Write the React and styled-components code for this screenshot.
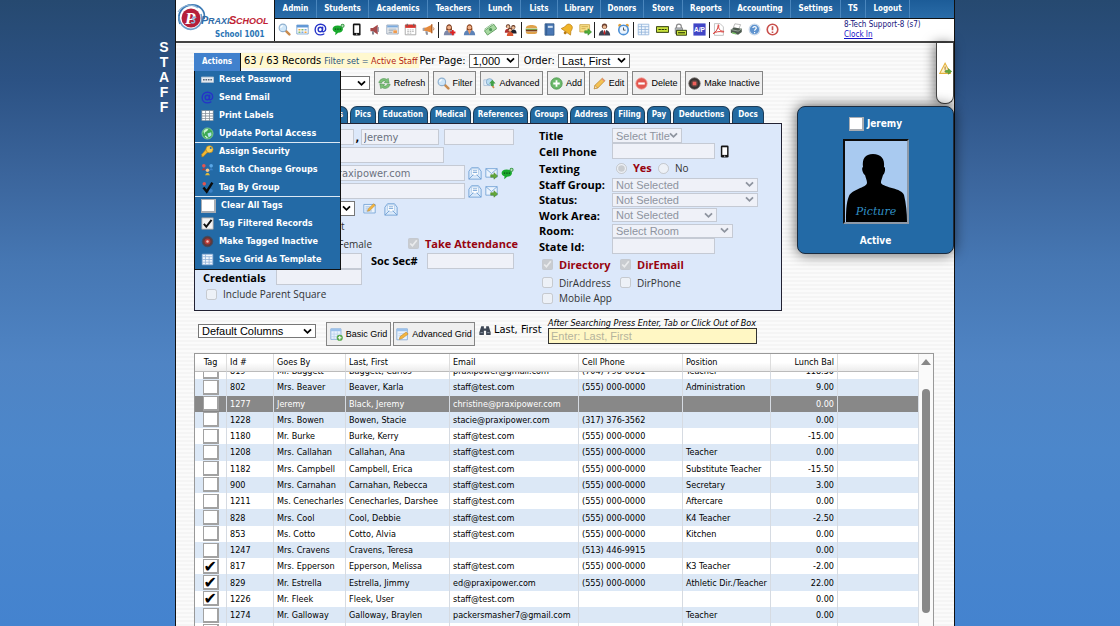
import React, { useLayoutEffect, useRef } from "react";
import styled, { createGlobalStyle } from "styled-components";

const UI = '"DejaVu Sans Condensed", "DejaVu Sans", Tahoma, sans-serif';
const FORM = '"Open Sans", "Noto Sans", Tahoma, sans-serif';
const ARIAL = '"Liberation Sans", Arial, sans-serif';

const GlobalStyle = createGlobalStyle`
  * { box-sizing: border-box; }
  body {
    margin: 0;
    font-family: ${UI};
    font-size: 11px;
    color: #000;
    background: #4585cf;
  }
  button, input, select { margin: 0; }
`;

/* ---------- icons ---------- */

const person = (x, y, c) => (
  <g>
    <circle cx={x} cy={y} r="2.6" fill="#5a2d1a" />
    <circle cx={x} cy={y + 0.7} r="1.8" fill="#f0c09a" />
    <path d={`M${x - 4} ${y + 8}q0-5 4-5t4 5z`} fill={c} />
  </g>
);

const drawings = {
  search: (
    <g>
      <path d="M9 9l5 5" stroke="#c98b4e" strokeWidth="3" strokeLinecap="round" />
      <circle cx="6" cy="6" r="4.6" fill="#cfe6f8" stroke="#8fb0cf" strokeWidth="1.4" />
      <path d="M3.5 6a2.6 2.6 0 0 1 2.6-2.6" stroke="#fff" fill="none" strokeWidth="1.3" />
    </g>
  ),
  calendarGrid: (
    <g>
      <path d="M1 2.5h14v11H1z" fill="#fff" stroke="#6f9ccb" />
      <path d="M1 2.5h14v3H1z" fill="#5f97d6" />
      <path d="M3 7.500h2.500v1.800H3zM10.500 10.500h2.500v1.800h-2.500z" fill="#f0a63c" />
      <path d="M6.700 7.500h2.500v1.800H6.700zM3 10.500h2.500v1.800H3z" fill="#7db96b" />
      <path d="M10.500 7.500h2.500v1.800h-2.500zM6.700 10.500h2.500v1.800H6.700z" fill="#7ea6d8" />
    </g>
  ),
  at: (
    <g fill="none" stroke="#2533c8" strokeWidth="1.700" strokeLinecap="round">
      <circle cx="7.800" cy="8" r="2.700" />
      <path d="M10.700 5.200l-.5 4.300c-.2 2.200 3.900 1.500 4.200-2 .2-3.500-2.700-6-6.300-6C4.200 1.500 1.400 4.500 1.400 8.200c0 3.800 2.700 6.400 6.500 6.400 1.700 0 3.100-.4 4.200-1.100" />
    </g>
  ),
  chat: (
    <g>
      <path d="M7 3c4 0 6.500 1.800 6.500 4.500S11 12 7.500 12L4 15l.3-3.600C2 10.700.7 9.300.7 7.500.7 4.800 3 3 7 3z" fill="#18a92c" />
      <path d="M3.500 7.500h1.600M6.500 7.500h1.600M9.500 7.500h1.600" stroke="#0a4f14" strokeWidth="1.500" />
      <circle cx="13" cy="3.500" r="2.500" fill="#3d9a4a" />
      <path d="M13 2v3M11.500 3.500h3" stroke="#d8f5dc" strokeWidth=".8" />
    </g>
  ),
  phone: (
    <g>
      <rect x="3.500" y=".5" width="9.500" height="15" rx="1.600" fill="#151515" />
      <rect x="5.300" y="2.800" width="5.900" height="9.400" fill="#fff" />
      <circle cx="8.250" cy="13.800" r=".8" fill="#ddd" />
    </g>
  ),
  speaker: (
    <g>
      <path d="M3 6h3l6-4v12l-6-4H3z" fill="#a64a4a" />
      <path d="M5 10v4h2.500l-.5-4z" fill="#7c7c86" />
      <path d="M12.500 5v6" stroke="#8c8ca0" strokeWidth="1.600" />
    </g>
  ),
  news: (
    <g>
      <path d="M1 2.500h14v11H1z" fill="#f6f6f6" stroke="#8b9bb0" />
      <path d="M1.500 3h13v2.500h-13z" fill="#79a9dd" />
      <path d="M3 7.500h10M3 9.500h6M3 11.500h5" stroke="#89a" />
      <path d="M9 9h4.500v3.500H9z" fill="#ef9a4d" />
    </g>
  ),
  calendar: (
    <g>
      <path d="M1.500 2.500h13v12h-13z" fill="#fff" stroke="#9a9a9a" />
      <path d="M1.500 2h13v4h-13z" fill="#d9332b" />
      <path d="M4 1v3M12 1v3" stroke="#666" strokeWidth="1.400" />
      <path d="M4 8.500h8M4 10.500h8M4 12.500h5" stroke="#aaa" strokeDasharray="2 1" />
    </g>
  ),
  megaphone: (
    <g>
      <path d="M1 6l4-.5L12 2v10L5 9.800 1 9.500z" fill="#e58a3c" />
      <path d="M12 1.500v11" stroke="#b5642a" strokeWidth="1.800" />
      <path d="M4 10l1 4.500h2.500L6.800 10z" fill="#8b8f9c" />
      <path d="M1 6v3.500h2V5.800z" fill="#9ca3b3" />
      <path d="M14 5.500q1.500 1.500 0 3.500" stroke="#b5642a" fill="none" />
    </g>
  ),
  personAdd: (
    <g>
      <path d="M4 6c0-6 7-6 7 0v3H4z" fill="#7a3a1c" />
      <circle cx="7.500" cy="5.500" r="2.400" fill="#f0b088" />
      <path d="M1 15q0-6.500 6.500-6.500T14 15z" fill="#7d88a8" />
      <path d="M5.500 8.500h4L7.500 13z" fill="#e89a6a" />
      <path d="M12 8.500v6.500M8.800 11.700h6.500" stroke="#e02020" strokeWidth="2.200" />
    </g>
  ),
  personDesk: (
    <g>
      <path d="M4.500 6c0-6 7-6 7 0v3.500h-7z" fill="#8a431d" />
      <circle cx="8" cy="5.500" r="2.400" fill="#f0b088" />
      <path d="M1 15q0-6.500 7-6.500t7 6.500z" fill="#5d83b8" />
      <path d="M5.500 8.500h5L8 14z" fill="#e89a6a" />
    </g>
  ),
  money: (
    <g transform="rotate(-35 8 8)">
      <path d="M1 5h14v6.500H1z" fill="#a7d8a0" stroke="#5a9a5a" />
      <circle cx="8" cy="8.200" r="2" fill="#4f9457" />
      <path d="M2 3.500h12" stroke="#86bd86" />
    </g>
  ),
  family: (
    <g>
      {person(5, 4, "#b03030")}
      {person(11.500, 5, "#20202a")}
      {person(7.500, 8.200, "#d9542f")}
    </g>
  ),
  burger: (
    <g>
      <path d="M1 6.500C1 3.500 4 2.500 8 2.500s7 1 7 4z" fill="#e0a24a" />
      <path d="M.8 7h14.400v1.500H.8z" fill="#6aa23c" />
      <path d="M1 8.500h14v2H1z" fill="#7b3f1c" />
      <path d="M1 10.800h14c0 2-1 2.700-3 2.700H4c-2 0-3-.7-3-2.700z" fill="#e0a24a" />
    </g>
  ),
  book: (
    <g>
      <path d="M2.500 1h11v14h-11z" fill="#4a78b5" stroke="#2f5788" />
      <path d="M4.500 1v14" stroke="#2f5788" />
      <path d="M6 3.500h6v2.500H6z" fill="#cfe0f2" />
    </g>
  ),
  bell: (
    <g transform="rotate(35 8 8)">
      <path d="M8 1c4 0 4.500 3.500 4.700 6.500L15 11.500H1L3.300 7.500C3.500 4.500 4 1 8 1z" fill="#f0b429" stroke="#b97a10" strokeWidth=".8" />
      <circle cx="8" cy="13" r="1.800" fill="#b97a10" />
    </g>
  ),
  noteArrow: (
    <g>
      <path d="M1 2h12v9H1z" fill="#f8df87" stroke="#caa244" />
      <path d="M3 4.500h8M3 7h5" stroke="#caa244" />
      <path d="M7 9.500h4V7l4.500 4-4.500 4v-2.500H7z" fill="#4fae3a" stroke="#2d7a20" strokeWidth=".6" />
    </g>
  ),
  manSuit: (
    <g>
      <circle cx="8" cy="4" r="3.300" fill="#6b4030" />
      <circle cx="8" cy="5" r="2.200" fill="#e9b893" />
      <path d="M1 15.500q0-7 7-7t7 7z" fill="#3c4150" />
      <path d="M6 8.500h4L8 14z" fill="#fff" />
      <path d="M7.500 9h1l.6 4-1.100 1.500L6.900 13z" fill="#c22" />
    </g>
  ),
  clock: (
    <g>
      <circle cx="3.500" cy="3" r="2" fill="#e2a03a" />
      <circle cx="12.500" cy="3" r="2" fill="#e2a03a" />
      <circle cx="8" cy="8.500" r="5.800" fill="#eaf4ff" stroke="#4b8fd6" strokeWidth="2" />
      <path d="M8 5.500v3.300h2.500" stroke="#333" fill="none" />
    </g>
  ),
  table: (
    <g>
      <path d="M1.500 1.500h13v13h-13z" fill="#f1f7fd" stroke="#92b4da" />
      <path d="M1.500 4.500h13M1.500 8h13M1.500 11.300h13M5.500 1.500v13M10 4.500v10" stroke="#92b4da" />
    </g>
  ),
  register: (
    <g>
      <path d="M.5 4.500h15v7H.5z" fill="#c9e23c" stroke="#2b3808" strokeWidth="1.200" />
      <path d="M3 8h10" stroke="#2b3808" strokeWidth="1.500" strokeDasharray="3 .8" />
    </g>
  ),
  lockCard: (
    <g>
      <path d="M3 8V4.500a3 3 0 0 1 6 0V8" fill="none" stroke="#8c8c8c" strokeWidth="1.500" />
      <path d="M1.500 6h9v7h-9z" fill="#b7bcc4" stroke="#777" strokeWidth=".8" />
      <path d="M3 9h12.500v6H3z" fill="#c9e23c" stroke="#2b3808" strokeWidth="1.200" />
      <path d="M5 12h8.500" stroke="#2b3808" strokeWidth="1.400" />
    </g>
  ),
  ap: (
    <g>
      <path d="M.5.5h15v15H.5z" fill="#4146c6" />
      <text x="8" y="11.500" textAnchor="middle" fontFamily="Liberation Sans, sans-serif" fontWeight="700" fontSize="8" fill="#fff">A/P</text>
    </g>
  ),
  pdf: (
    <g>
      <path d="M3 .8h7l4 4v10.400H3z" fill="#fff" stroke="#b5b5b5" />
      <path d="M1.500 13C5 11 7.500 7 7.500 3c0-1.500 1.300-1 .8.800C7.600 7 10 10 14 10.200c1.500.2.500 1.200-1 .8-4-1-8-.3-11.500 2z" fill="none" stroke="#d93a35" strokeWidth="1.200" />
    </g>
  ),
  printer: (
    <g>
      <path d="M6 1l7 1-2 5-7-1z" fill="#fff" stroke="#888" strokeWidth=".7" />
      <path d="M1 8l4-2.500L14.500 7v4L10 14.500 1 12z" fill="#4d5a4f" />
      <path d="M1 8l9 2 4.500-3" stroke="#a8b5a8" fill="none" />
      <path d="M3 11l5 1.500-1 1.500-5-1.500z" fill="#7cc36a" />
    </g>
  ),
  help: (
    <g>
      <circle cx="8" cy="8" r="6.500" fill="#5e93cf" stroke="#c8d8ea" strokeWidth="1.600" />
      <path d="M6 6.300c0-2.600 4.200-2.500 4.200 0 0 1.600-2.100 1.500-2.100 3.200M8.100 11v1.500" stroke="#fff" strokeWidth="1.500" fill="none" />
    </g>
  ),
  power: (
    <g>
      <circle cx="8" cy="8" r="6.500" fill="#fff" stroke="#c9504c" strokeWidth="2" />
      <path d="M8 4v5M8 10.500v1.800" stroke="#c9504c" strokeWidth="2" />
    </g>
  ),
  password: (
    <g>
      <path d="M.5 5h15v6.500H.5z" fill="#e8eef4" stroke="#b9c6d4" />
      <path d="M2.500 8.300h11" stroke="#59687a" strokeWidth="1.600" strokeDasharray="2 1" />
    </g>
  ),
  labels: (
    <g>
      <path d="M.5 1.500h15v13H.5z" fill="#8a939c" />
      <path d="M1.500 2.500h3.700v2.300H1.500zM6.200 2.500h3.700v2.300H6.200zM10.900 2.500h3.700v2.300h-3.700zM1.500 5.800h3.700v2.300H1.500zM6.200 5.800h3.700v2.300H6.200zM10.900 5.800h3.700v2.300h-3.700zM1.500 9.100h3.700v2H1.500zM6.200 9.100h3.700v2H6.200zM10.900 9.100h3.700v2h-3.700zM1.500 12h3.700v1.700H1.500zM6.200 12h3.700v1.700H6.200zM10.900 12h3.700v1.700h-3.700z" fill="#fff" />
    </g>
  ),
  globe: (
    <g>
      <circle cx="8" cy="8" r="6.800" fill="#3faa55" stroke="#8fd49a" />
      <path d="M3 5q3-3.500 6-2.500L7.500 5 5 6.500 4 9z" fill="#c7efcf" />
      <path d="M8 8l4.500-1.500L13 10l-3.500 3z" fill="#b4e3f5" />
      <path d="M5 11l3 2.500" stroke="#e6f8e8" strokeWidth="1.400" />
    </g>
  ),
  key: (
    <g>
      <path d="M9 8l-6.500 6.500H1V11.500L6.500 5z" fill="#f2b632" stroke="#b98212" strokeWidth=".7" />
      <circle cx="10.500" cy="5.200" r="4.400" fill="#f8cb52" stroke="#b98212" strokeWidth=".8" />
      <circle cx="12" cy="3.800" r="1.200" fill="#2470ad" />
    </g>
  ),
  groups: (
    <g>
      <circle cx="3.500" cy="3.500" r="2.200" fill="#e3554f" />
      <path d="M1 9q2.500-5 5 0z" fill="#b93530" />
      <circle cx="12.500" cy="3.500" r="2.200" fill="#5aa8e8" />
      <path d="M10 9q2.500-5 5 0z" fill="#3b82c8" />
      <circle cx="8" cy="9" r="2.200" fill="#f5c28a" />
      <path d="M5 15q3-6 6 0z" fill="#e2b93b" />
    </g>
  ),
  tagGroup: (
    <g>
      <circle cx="4" cy="3.500" r="2.200" fill="#e3554f" />
      <circle cx="12" cy="12" r="2.500" fill="#3b82c8" />
      <path d="M3 8l4 5 7-11" fill="none" stroke="#0b0b0b" strokeWidth="3" />
    </g>
  ),
  checked: (
    <g>
      <path d="M1 1h14v14H1z" fill="#f3f3f3" stroke="#9a9a9a" />
      <path d="M3.500 8.500l3 3.500L13 3.500" fill="none" stroke="#111" strokeWidth="2.400" />
    </g>
  ),
  stop: (
    <g>
      <circle cx="8" cy="8" r="7" fill="#33302f" stroke="#6d6562" strokeWidth="1" />
      <circle cx="8" cy="8" r="4.600" fill="#54403d" />
      <path d="M5.700 5.700h4.600v4.600H5.700z" fill="#f0605a" />
    </g>
  ),
  inactive: (
    <g>
      <circle cx="8" cy="8" r="6.500" fill="#5d3a3e" stroke="#3f4a5e" />
      <circle cx="8" cy="8" r="3.600" fill="#b63a36" />
      <circle cx="8" cy="8" r="1.500" fill="#f4c3bd" />
    </g>
  ),
  refresh: (
    <g fill="#7cc077" stroke="#3c8443" strokeWidth=".6">
      <path d="M1 7C2 2.500 7 .5 11 3L12.500 1.500l1.200 6-6-.5 1.600-1.600C7.200 4.200 5 5 4.300 7.500z" />
      <path d="M15 9c-1 4.500-6 6.500-10 4L3.500 14.500l-1.200-6 6 .5-1.600 1.600c2.100 1.200 4.300.4 5-2.100z" />
    </g>
  ),
  advanced: (
    <g>
      <path d="M1 3.500h8v7H1z" fill="#e4eef8" stroke="#a9bfd6" />
      <circle cx="8" cy="6" r="4" fill="#b9dcf2" stroke="#7fa5c8" />
      <path d="M10.500 9.500l3 4" stroke="#c98b4e" strokeWidth="2" />
      <path d="M11.500 3.500l4 4.500h-2.300v3H9.800V8H7.500z" fill="#43a047" />
    </g>
  ),
  add: (
    <g>
      <circle cx="8" cy="8" r="7" fill="#6bb96a" stroke="#4b924c" />
      <path d="M8 4v8M4 8h8" stroke="#fff" strokeWidth="2.200" />
    </g>
  ),
  edit: (
    <g>
      <path d="M1.500 14.500l1-4.500L11.500 1.500l3.200 3L6 13.500z" fill="#f4c153" stroke="#b57f21" strokeWidth=".8" />
      <path d="M1.500 14.500l1-4 3 3z" fill="#f7e3c2" stroke="#b57f21" strokeWidth=".6" />
      <path d="M10.500 2.500l3.200 3 1-1-3.200-3z" fill="#e5877c" />
    </g>
  ),
  remove: (
    <g>
      <circle cx="8" cy="8" r="7" fill="#e2574f" stroke="#f0a49f" />
      <path d="M4 8h8" stroke="#fff" strokeWidth="2.600" />
    </g>
  ),
  mail: (
    <g>
      <path d="M1 6l3-4h8l3 4v9H1z" fill="#dbeafb" stroke="#6f9fd4" />
      <path d="M4 3.500h8v6L8 11.500 4 9.500z" fill="#fff" stroke="#9dbfe4" strokeWidth=".7" />
      <path d="M1 15l5-5M15 15l-5-5M5.500 5.500h5M5.500 7.500h5" stroke="#6f9fd4" fill="none" />
    </g>
  ),
  mailSend: (
    <g>
      <path d="M1 2h14v10.500H1z" fill="#eaf3fd" stroke="#6f9fd4" />
      <path d="M1 2l7 6 7-6" stroke="#6f9fd4" fill="none" />
      <path d="M7 9.500h4V7l4.500 4-4.500 4v-2.500H7z" fill="#63a83a" stroke="#3c7a20" strokeWidth=".6" />
    </g>
  ),
  mailEdit: (
    <g>
      <path d="M1 3h14v10.500H1z" fill="#eaf3fd" stroke="#6f9fd4" />
      <path d="M3 6h6M3 8.500h4M3 11h8" stroke="#8fb0d8" />
      <path d="M5.500 11.500l1-3L13 2l2 2-6.500 6.500z" fill="#f4b53f" stroke="#b57f21" strokeWidth=".6" />
    </g>
  ),
  gridAdd: (
    <g>
      <path d="M1 1h12.500v13H1z" fill="#eaf3fd" stroke="#7fa7d6" />
      <path d="M1 1h12.500v3H1z" fill="#9cc2ec" />
      <path d="M1 7.500h12M1 10.700h12M5 4v10M9 4v10" stroke="#bcd3ec" />
      <circle cx="12" cy="12" r="3.800" fill="#57a94c" />
      <path d="M12 9.800v4.400M9.800 12h4.400" stroke="#fff" strokeWidth="1.400" />
    </g>
  ),
  gridEdit: (
    <g>
      <path d="M1 1h13v13.500H1z" fill="#eaf3fd" stroke="#7fa7d6" />
      <path d="M1 1h13v3H1z" fill="#9cc2ec" />
      <path d="M3 7h9M3 9.500h5" stroke="#bcd3ec" />
      <path d="M4 14l1-3.500L12.500 5 15 7.500 7.500 13z" fill="#f4b53f" stroke="#b57f21" strokeWidth=".6" />
    </g>
  ),
  binoculars: (
    <g fill="#3d4654">
      <path d="M3 3h3.500v3h3V3H13l2.500 8v3.500h-6V9h-3v5.500h-6V11z" />
      <path d="M2 11.500h3M11 11.500h3" stroke="#a9b5c6" />
    </g>
  ),
  warning: (
    <g>
      <path d="M7.500 1.500L14 14H1z" fill="#fdf1c9" stroke="#e3b13c" strokeWidth="1.300" />
      <path d="M7.500 5.500v4M7.500 10.800v1.400" stroke="#a9762a" strokeWidth="1.300" />
      <path d="M8 10.300h3.500V8l4.200 3.600-4.200 3.600v-2.400H8z" fill="#63a83a" stroke="#3c7a20" strokeWidth=".5" />
    </g>
  ),
};

const Svg = styled.svg`
  flex: none;
  display: block;
`;

const Icon = ({ name, size = 13 }) => (
  <Svg width={size} height={size} viewBox="0 0 16 16" aria-hidden="true">
    {drawings[name]}
  </Svg>
);

/* ---------- page frame ---------- */

const Backdrop = styled.div`
  display: flex;
  justify-content: center;
  height: 100vh;
  padding-left: 10px;
  overflow: hidden;
  background: linear-gradient(#264970, #2c5284 13%, #3b659c 28%, #4677b3 42%, #4f84c4 58%, #4c87cb 72%, #4483cf);
`;

const Margin = styled.div`
  flex: 1;
  display: flex;
  flex-direction: column;
  align-items: flex-end;
  padding: 40px 4px 0 0;
`;

const SideLetter = styled.span`
  width: 14px;
  font: bold 14px/14px ${ARIAL};
  text-align: center;
  color: #fff;
  margin-bottom: 1px;
`;

const Page = styled.div`
  flex: 0 1 780px;
  min-width: 0;
  display: flex;
  flex-direction: column;
  border: solid #111;
  border-width: 0 1px;
  background: repeating-linear-gradient(#f5f5f5 0 2px, #fbfbfb 2px 4px);
`;

/* ---------- header ---------- */

const Header = styled.header`
  display: flex;
  background: #fff;
  border-bottom: 2px solid #444;
`;

const Brand = styled.div`
  flex: none;
  width: 99px;
  height: 41px;
  border-right: 1px solid #111;
`;

const HeaderMain = styled.div`
  flex: 1;
  min-width: 0;
`;

const Nav = styled.nav`
  display: flex;
  height: 19px;
  background: linear-gradient(#1c5c98, #2a6ca8);
  border-bottom: 1px solid #111;
`;

const NavLink = styled.a`
  width: ${(p) => p.$w}px;
  border-right: 1px solid #4a86bd;
  font: bold 8px/18px ${UI};
  text-align: center;
  text-decoration: none;
  color: #fff;
`;

const ToolBar = styled.div`
  display: flex;
  align-items: center;
  height: 21px;
`;

const ToolGroup = styled.div`
  display: flex;
  align-items: center;
  justify-content: space-around;
  width: ${(p) => p.$w}px;
  height: 16px;
  border-left: ${(p) => (p.$first ? "0" : "1px solid #222")};
`;

const IconButton = styled.button`
  padding: 0;
  border: 0;
  background: none;
`;

const UserInfo = styled.div`
  margin-left: auto;
  width: 110px;
  font-size: 8px;
  line-height: 10px;
  color: #14147c;
`;

const ClockLink = styled.a`
  color: #1414c8;
`;

const nav = [
  ["Admin", 42], ["Students", 52], ["Academics", 59], ["Teachers", 52], ["Lunch", 41],
  ["Lists", 37], ["Library", 43], ["Donors", 43], ["Store", 39], ["Reports", 47],
  ["Accounting", 61], ["Settings", 50], ["TS", 25], ["Logout", 44],
];

const tools = [
  [163, ["search", "calendarGrid", "at", "chat", "phone", "speaker", "news", "calendar", "megaphone"]],
  [83, ["personAdd", "personDesk", "money", "family"]],
  [73, ["burger", "book", "bell", "noteArrow"]],
  [39, ["manSuit", "clock"]],
  [76, ["table", "register", "lockCard", "ap"]],
  [72, ["pdf", "printer", "help", "power"]],
];

const Logo = () => (
  <Svg width="98" height="40" viewBox="0 0 98 40" role="img" aria-label="PraxiSchool School 1001">
    <circle cx="15" cy="18" r="9.500" fill="#b5203a" />
    <path d="M4 24C0 13 7 5 16 5c8 0 14 6 12 14" fill="none" stroke="#3d7bb5" strokeWidth="1.800" />
    <path d="M3 16c0 10 9 16 17 12 5-3 7-8 5-14" fill="none" stroke="#6d9ecb" strokeWidth="1.600" />
    <path d="M2 12c4-7 14-9 20-4" fill="none" stroke="#8fb4d6" strokeWidth="1.200" />
    <text x="9" y="24" fontFamily="Liberation Serif, serif" fontStyle="italic" fontWeight="700" fontSize="17" fill="#fff">P</text>
    <path d="M20 18c-2-2-4.500 0-2.500 1.700s1.500 4-2.500 2.800" fill="none" stroke="#8fb4d6" strokeWidth="1.600" />
    <g fontFamily="Liberation Sans, sans-serif" fontStyle="italic" fontWeight="700">
      <text x="25" y="24" fontSize="11" fill="#2f6ba8">P</text>
      <text x="32" y="24" fontSize="9" fill="#2f6ba8">RAXI</text>
      <text x="53" y="24" fontSize="11" fill="#c01f35">S</text>
      <text x="60" y="24" fontSize="9" fill="#c01f35">CHOOL</text>
    </g>
    <text x="39" y="37" fontFamily="DejaVu Sans Condensed, DejaVu Sans, sans-serif" fontWeight="700" fontSize="8" fill="#2a75b5">School 1001</text>
  </Svg>
);

/* ---------- upper section ---------- */

const Upper = styled.div`
  display: flex;
  justify-content: space-between;
`;

const Editor = styled.main`
  width: 588px;
  margin-left: 18px;
  padding-top: 10px;
`;

const RecordBar = styled.div`
  display: flex;
  align-items: flex-start;
  height: 18px;
  white-space: nowrap;
`;

const ActionsWrap = styled.div`
  position: relative;
  z-index: 2;
`;

const ActionsButton = styled.button`
  width: 47px;
  height: 18px;
  padding: 0;
  border: 0;
  border-right: 1px solid #111;
  background: #4181cd;
  color: #fff;
  font: bold 8px/18px ${UI};
`;

const Menu = styled.ul`
  position: absolute;
  top: 18px;
  left: 0;
  width: 147px;
  margin: 0;
  padding: 0;
  list-style: none;
  background: #236aa6;
  border: 1px solid #111;
  border-top: 0;
`;

const MenuItem = styled.li`
  height: 18px;
  border-bottom: ${(p) => (p.$last ? "1px solid #dce9f5" : "0")};
`;

const MenuButton = styled.button`
  display: flex;
  align-items: center;
  gap: 5px;
  width: 100%;
  height: 17px;
  padding: 0 0 0 6px;
  border: 0;
  background: none;
  color: #fff;
  font: bold 9px/17px ${UI};
  white-space: nowrap;
`;

const EmptyBox = styled.span`
  width: 15px;
  height: 14px;
  background: #fff;
  border: 1px solid #a9adb3;
  border-width: 1px 2px 2px 1px;
`;

const actions = [
  ["password", "Reset Password"], ["at", "Send Email"], ["labels", "Print Labels"],
  ["globe", "Update Portal Access", true], ["key", "Assign Security"],
  ["groups", "Batch Change Groups"], ["tagGroup", "Tag By Group", true],
  [null, "Clear All Tags"], ["checked", "Tag Filtered Records"],
  ["inactive", "Make Tagged Inactive"], ["table", "Save Grid As Template"],
];

const Records = styled.div`
  height: 15px;
  padding: 0 1px 0 3px;
  background: #fff8cf;
  font-size: 11px;
  line-height: 15px;
`;

const FilterNote = styled.span`
  margin-left: 3px;
  font-size: 9px;
  color: #27527c;
`;

const FilterValue = styled.span`
  color: #b3200c;
`;

const SelectLabel = styled.label`
  display: flex;
  align-items: center;
  gap: 3px;
  margin: 0 4px 0 1px;
  height: 15px;
  font-size: 11px;
`;

const SelectFrame = styled.span`
  flex: none;
  display: inline-grid;
  align-items: center;
  width: ${(p) => p.$w}px;
  height: ${(p) => p.$h}px;
  color: ${(p) => (p.$off ? "#8e949f" : "#000")};
  > * { grid-area: 1 / 1; }
  > svg {
    justify-self: end;
    margin-right: 4px;
    pointer-events: none;
  }
`;

const SelectControl = styled.select`
  appearance: none;
  width: 100%;
  height: 100%;
  padding: 0 0 0 3px;
  border: 1px solid #777;
  border-radius: 0;
  background: #fff;
  color: inherit;
  font: 11px/12px ${ARIAL};
  &:disabled {
    opacity: 1;
    background: #eff1f8;
    border-color: #c5cad4;
  }
`;

const Select = ({ w, h = 14, children, ...rest }) => (
  <SelectFrame $w={w} $h={h} $off={rest.disabled}>
    <SelectControl {...rest}><option>{children}</option></SelectControl>
    <svg width="9" height="7" viewBox="0 0 9 7" aria-hidden="true">
      <path d="M1 1.300l3.500 3.500L8 1.300" fill="none" stroke="currentColor" strokeWidth="1.800" />
    </svg>
  </SelectFrame>
);

const ButtonRow = styled.div`
  display: flex;
  gap: 4px;
  align-items: center;
  height: 24px;
  padding-left: 4px;
`;

const PushButton = styled.button`
  display: flex;
  align-items: center;
  justify-content: center;
  gap: 3px;
  width: ${(p) => p.$w}px;
  height: 24px;
  padding: 0;
  border: 1px solid #858585;
  background: #efefef;
  color: #000;
  font: 9px/13px ${ARIAL};
  white-space: nowrap;
`;

const buttons = [
  ["refresh", "Refresh", 55], ["search", "Filter", 43], ["advanced", "Advanced", 63],
  ["add", "Add", 38], ["edit", "Edit", 39], ["remove", "Delete", 49], ["stop", "Make Inactive", 78],
];

const Tabs = styled.div`
  display: flex;
  gap: 2px;
  margin-top: 11px;
`;

const Tab = styled.button`
  width: ${(p) => p.$w}px;
  height: 17px;
  border: 1px solid #1c3c58;
  border-bottom: 0;
  border-radius: 7px 7px 0 0;
  background: #236aa0;
  color: #fff;
  font: bold 8px/16px ${UI};
  text-align: ${(p) => (p.$end ? "right" : "center")};
  padding: 0 ${(p) => (p.$end ? 4 : 0)}px 0 0;
`;

const tabs = [
  ["Pics", 26], ["Education", 50], ["Medical", 41], ["References", 55], ["Groups", 38],
  ["Address", 42], ["Filing", 31], ["Pay", 24], ["Deductions", 57], ["Docs", 32],
];

const Panel = styled.form`
  display: flex;
  height: 188px;
  padding: 4px 8px 0;
  background: #dce8fa;
  border: 1px solid #223;
`;

const FormLeft = styled.div`
  width: 336px;
`;

const FormRight = styled.div`
  flex: 1;
`;

const Line = styled.div`
  display: flex;
  align-items: center;
  gap: ${(p) => p.$gap || 0}px;
  height: ${(p) => p.$h || 18}px;
  padding-left: ${(p) => p.$in || 0}px;
`;

const Comma = styled.b`
  width: 7px;
  text-align: center;
`;

const Field = styled.input`
  width: ${(p) => p.$w}px;
  height: 16px;
  padding: 0 2px;
  border: 1px solid #c5cad4;
  background: #eff1f8;
  color: #6b7280;
  font: 11px/14px ${UI};
`;

const Label = styled.label`
  width: ${(p) => (p.$w ? `${p.$w}px` : "auto")};
  font: bold 11px/15px ${FORM};
  white-space: nowrap;
`;

const Tick = styled.input`
  width: 11px;
  height: 11px;
  flex: none;
`;

const TickLabel = styled.label`
  display: flex;
  align-items: center;
  justify-content: ${(p) => (p.$end ? "flex-end" : "flex-start")};
  gap: 6px;
  width: ${(p) => (p.$w ? `${p.$w}px` : "auto")};
  font: 10px/14px ${FORM};
  color: #333;
  white-space: nowrap;
`;

const Strong = styled.b`
  font-size: 11px;
  color: #98040f;
`;

/* ---------- profile card ---------- */

const Aside = styled.aside`
  display: flex;
  flex-direction: column;
  align-items: flex-end;
  width: 157px;
`;

const AlertTab = styled.button`
  display: grid;
  place-items: center;
  width: 18px;
  height: 61px;
  padding: 0 0 10px;
  border: 1px solid #444;
  border-top: 0;
  border-radius: 0 0 8px 8px;
  background: #fff;
  box-shadow: -2px 0 12px rgba(0, 0, 0, 0.5);
`;

const Card = styled.section`
  display: flex;
  flex-direction: column;
  align-items: center;
  width: 100%;
  height: 148px;
  margin-top: 2px;
  padding-top: 9px;
  border: 1px solid #1b2c40;
  border-radius: 8px;
  background: #236aa6;
  box-shadow: 0 0 14px rgba(0, 0, 0, 0.65);
  color: #fff;
  font-weight: bold;
  font-size: 10px;
`;

const CardName = styled.div`
  display: flex;
  align-items: center;
  gap: 3px;
  height: 15px;
`;

const Photo = styled.div`
  width: 66px;
  height: 85px;
  margin: 8px 0 11px;
  border: 2px solid #0b0b0b;
  border-right-color: #8d99a8;
  border-bottom-color: #8d99a8;
  background: #a9caf0;
`;

/* ---------- grid ---------- */

const GridTools = styled.div`
  display: flex;
  align-items: flex-start;
  height: 26px;
  margin: 10px 0 0 22px;
`;

const GridButtons = styled.div`
  display: flex;
  gap: 2px;
  margin: 0 4px 0 10px;
  padding-top: 1px;
`;

const FindLabel = styled.label`
  display: flex;
  align-items: center;
  gap: 3px;
  width: 69px;
  height: 17px;
  font-size: 11px;
  white-space: nowrap;
`;

const SelectSlot = styled.div`
  padding-top: 3px;
`;

const Hint = styled.div`
  font-style: italic;
  font-size: 9px;
  line-height: 10px;
  margin-top: -3px;
`;

const SearchBox = styled.input`
  display: block;
  width: 209px;
  height: 16px;
  padding: 0 2px;
  border: 1px solid #333;
  background: #fff7c4;
  font: 11px/14px ${ARIAL};
  &::placeholder { color: #b5b39c; }
`;

const GridFrame = styled.section`
  flex: 1;
  min-height: 0;
  display: flex;
  margin: 6px 20px 0 18px;
  border: 1px solid #999;
  border-bottom: 0;
  background: #fff;
`;

const Scroller = styled.div`
  flex: 1;
  min-width: 0;
  overflow: hidden;
`;

const DataTable = styled.table`
  width: 100%;
  height: 311px;
  table-layout: fixed;
  border-collapse: separate;
  border-spacing: 0;
  font-size: 9px;
`;

const Head = styled.th`
  position: sticky;
  top: 0;
  z-index: 1;
  height: 18px;
  padding: 0 3px 2px;
  border-right: 1px solid #ddd;
  border-bottom: 1px solid #bbb;
  background: linear-gradient(#fff 50%, #ececec);
  font-weight: normal;
  line-height: 14px;
  text-align: ${(p) => p.$align || "left"};
`;

const Row = styled.tr`
  background: ${(p) => (p.$selected ? "#888" : p.$odd ? "#dce8f6" : "#fff")};
  color: ${(p) => (p.$selected ? "#fff" : "#000")};
`;

const Cell = styled.td`
  padding: 0 3px;
  border-right: 1px solid #d6dbe2;
  line-height: 12px;
  text-align: ${(p) => p.$align || "left"};
  white-space: nowrap;
  overflow: hidden;
`;

const BoxCheck = styled.input`
  appearance: none;
  display: block;
  width: 16px;
  height: 15px;
  margin: 0 auto;
  border: 1px solid #a2a2a2;
  border-width: 1px 2px 2px 1px;
  background: #fff;
  color: #000;
  &:checked::after {
    content: "✔";
    display: block;
    font: 16px/14px "DejaVu Sans", sans-serif;
  }
`;

const ScrollBar = styled.div`
  display: flex;
  flex-direction: column;
  align-items: center;
  width: 14px;
  padding-top: 5px;
  background: #fafafa;
`;

const ScrollArrow = styled.div`
  border: solid transparent;
  border-width: 0 5px 6px;
  border-bottom-color: #888;
`;

const ScrollThumb = styled.div`
  flex: 1;
  width: 8px;
  margin: 24px 0 13px;
  border-radius: 4px;
  background: #888;
`;

const T = "staff@test.com";
const P = "(555) 000-0000";
const people = [
  ["819", "Mr. Baggett", "Baggett, Carlos", "praxipower@gmail.com", "(704) 798-0081", "Teacher", "-118.50"],
  ["802", "Mrs. Beaver", "Beaver, Karla", T, P, "Administration", "9.00"],
  ["1277", "Jeremy", "Black, Jeremy", "christine@praxipower.com", "", "", "0.00"],
  ["1228", "Mrs. Bowen", "Bowen, Stacie", "stacie@praxipower.com", "(317) 376-3562", "", "0.00"],
  ["1180", "Mr. Burke", "Burke, Kerry", T, P, "", "-15.00"],
  ["1208", "Mrs. Callahan", "Callahan, Ana", T, P, "Teacher", "0.00"],
  ["1182", "Mrs. Campbell", "Campbell, Erica", T, P, "Substitute Teacher", "-15.50"],
  ["900", "Mrs. Carnahan", "Carnahan, Rebecca", T, P, "Secretary", "3.00"],
  ["1211", "Ms. Cenecharles", "Cenecharles, Darshee", T, P, "Aftercare", "0.00"],
  ["828", "Mrs. Cool", "Cool, Debbie", T, P, "K4 Teacher", "-2.50"],
  ["853", "Ms. Cotto", "Cotto, Alvia", T, P, "Kitchen", "0.00"],
  ["1247", "Mrs. Cravens", "Cravens, Teresa", "", "(513) 446-9915", "", "0.00"],
  ["817", "Mrs. Epperson", "Epperson, Melissa", T, P, "K3 Teacher", "-2.00", true],
  ["829", "Mr. Estrella", "Estrella, Jimmy", "ed@praxipower.com", P, "Athletic Dir./Teacher", "22.00", true],
  ["1226", "Mr. Fleek", "Fleek, User", T, "", "", "0.00", true],
  ["1274", "Mr. Galloway", "Galloway, Braylen", "packersmasher7@gmail.com", "", "Teacher", "0.00"],
  ["", "", "", "", "", "", "", true],
  ["", "", "", "", "", "", ""],
];
const columns = [
  ["Tag", 32], ["Id #", 47], ["Goes By", 72], ["Last, First", 104],
  ["Email", 129], ["Cell Phone", 104], ["Position", 88], ["Lunch Bal", 67], ["", null],
];

function StaffGrid() {
  const scroller = useRef(null);
  useLayoutEffect(() => {
    scroller.current.scrollTop = 9;
  }, []);
  return (
    <GridFrame>
      <Scroller ref={scroller}>
        <DataTable>
          <colgroup>
            {columns.map(([name, w]) => <col key={name} width={w || undefined} />)}
          </colgroup>
          <thead>
            <tr>
              {columns.map(([name], i) => (
                <Head key={name} $align={i === 0 ? "center" : i === 7 ? "right" : "left"}>{name}</Head>
              ))}
            </tr>
          </thead>
          <tbody>
            {people.map((p, r) => (
              <Row key={r} $odd={r % 2 === 1} $selected={p[0] === "1277"}>
                <Cell><BoxCheck type="checkbox" aria-label={`Tag ${p[2]}`} defaultChecked={!!p[7]} /></Cell>
                {p.slice(0, 7).map((v, i) => (
                  <Cell key={i} $align={i === 6 ? "right" : "left"}>{v}</Cell>
                ))}
                <Cell />
              </Row>
            ))}
          </tbody>
        </DataTable>
      </Scroller>
      <ScrollBar>
        <ScrollArrow />
        <ScrollThumb />
      </ScrollBar>
    </GridFrame>
  );
}

function StaffForm() {
  return (
    <Panel>
      <FormLeft>
        <Line $in={73} $gap={5}>
          <Line>
            <Field $w={78} disabled aria-label="Last name" defaultValue="Black" />
            <Comma>,</Comma>
            <Field $w={78} disabled aria-label="First name" defaultValue="Jeremy" />
          </Line>
          <Field $w={70} disabled aria-label="Middle name" />
        </Line>
        <Line $in={73}><Field $w={168} disabled aria-label="Goes by" /></Line>
        <Line $in={73} $gap={3}>
          <Field $w={189} disabled aria-label="Email" defaultValue="christine@praxipower.com" />
          <Icon name="mail" size={14} /><Icon name="mailSend" size={13} /><Icon name="chat" size={13} />
        </Line>
        <Line $in={73} $gap={3}>
          <Field $w={189} disabled aria-label="Email 2" />
          <Icon name="mail" size={14} /><Icon name="mailSend" size={13} />
        </Line>
        <Line $in={73} $gap={8} $h={17}>
          <Select w={79} h={15} aria-label="Email type" />
          <Icon name="mailEdit" size={13} /><Icon name="mail" size={14} />
        </Line>
        <Line $in={68}><TickLabel><Tick type="checkbox" disabled />Bus Student</TickLabel></Line>
        <Line $in={73} $gap={36} $h={17}>
          <TickLabel $w={96} $end><Tick type="radio" disabled />Female</TickLabel>
          <TickLabel><Tick type="checkbox" disabled defaultChecked /><Strong>Take Attendance</Strong></TickLabel>
        </Line>
        <Line $in={73} $gap={9} $h={17}>
          <Field $w={86} disabled aria-label="Birth date" />
          <Label htmlFor="ssn">Soc Sec#</Label>
          <Field id="ssn" $w={87} disabled />
        </Line>
        <Line $h={16}>
          <Label htmlFor="cred" $w={73}>Credentials</Label>
          <Field id="cred" $w={86} disabled />
        </Line>
        <Line $in={3}><TickLabel><Tick type="checkbox" disabled />Include Parent Square</TickLabel></Line>
      </FormLeft>
      <FormRight>
        <Line $h={15}><Label $w={73} htmlFor="title">Title</Label><Select id="title" disabled h={15} w={70}>Select Title</Select></Line>
        <Line $h={16}>
          <Label $w={73} htmlFor="cell">Cell Phone</Label><Field id="cell" $w={103} disabled />
          <Line $in={3} $h={16}><Icon name="phone" size={13} /></Line>
        </Line>
        <Line $h={18}>
          <Label as="span" $w={77}>Texting</Label>
          <TickLabel $w={42}><Tick type="radio" name="texting" disabled defaultChecked /><Strong>Yes</Strong></TickLabel>
          <TickLabel><Tick type="radio" name="texting" disabled />No</TickLabel>
        </Line>
        <Line $h={15}><Label $w={73} htmlFor="group">Staff Group:</Label><Select id="group" disabled h={14} w={146}>Not Selected</Select></Line>
        <Line $h={15}><Label $w={73} htmlFor="status">Status:</Label><Select id="status" disabled h={14} w={146}>Not Selected</Select></Line>
        <Line $h={16}><Label $w={73} htmlFor="area">Work Area:</Label><Select id="area" disabled h={14} w={105}>Not Selected</Select></Line>
        <Line $h={15}><Label $w={73} htmlFor="room">Room:</Label><Select id="room" disabled h={14} w={121}>Select Room</Select></Line>
        <Line $h={16}><Label $w={73} htmlFor="state">State Id:</Label><Field id="state" $w={103} disabled /></Line>
        <Line $in={3} $h={21}>
          <TickLabel $w={78}><Tick type="checkbox" disabled defaultChecked /><Strong>Directory</Strong></TickLabel>
          <TickLabel><Tick type="checkbox" disabled defaultChecked /><Strong>DirEmail</Strong></TickLabel>
        </Line>
        <Line $in={3} $h={15}>
          <TickLabel $w={78}><Tick type="checkbox" disabled />DirAddress</TickLabel>
          <TickLabel><Tick type="checkbox" disabled />DirPhone</TickLabel>
        </Line>
        <Line $in={3} $h={16}><TickLabel><Tick type="checkbox" disabled />Mobile App</TickLabel></Line>
      </FormRight>
    </Panel>
  );
}

export default function App() {
  return (
    <>
      <GlobalStyle />
      <Backdrop>
        <Margin>
          {"STAFF".split("").map((c, i) => <SideLetter key={i}>{c}</SideLetter>)}
        </Margin>
        <Page>
          <Header>
            <Brand><Logo /></Brand>
            <HeaderMain>
              <Nav>{nav.map(([t, w]) => <NavLink key={t} href="#" $w={w}>{t}</NavLink>)}</Nav>
              <ToolBar>
                {tools.map(([w, icons], g) => (
                  <ToolGroup key={g} $w={w} $first={g === 0}>
                    {icons.map((n) => <IconButton key={n} type="button" aria-label={n}><Icon name={n} /></IconButton>)}
                  </ToolGroup>
                ))}
                <UserInfo>8-Tech Support-8 (s7)<br /><ClockLink href="#">Clock In</ClockLink></UserInfo>
              </ToolBar>
            </HeaderMain>
          </Header>

          <Upper>
            <Editor>
              <RecordBar>
                <ActionsWrap>
                  <ActionsButton type="button">Actions</ActionsButton>
                  <Menu>
                    {actions.map(([icon, text, last]) => (
                      <MenuItem key={text} $last={last}>
                        <MenuButton type="button">
                          {icon ? <Icon name={icon} /> : <EmptyBox />}
                          {text}
                        </MenuButton>
                      </MenuItem>
                    ))}
                  </Menu>
                </ActionsWrap>
                <Records>
                  63 / 63 Records
                  <FilterNote>Filter set = <FilterValue>Active Staff</FilterValue></FilterNote>
                </Records>
                <SelectLabel>Per Page:
                  <Select w={50}>1,000</Select>
                </SelectLabel>
                <SelectLabel>Order:
                  <Select w={72}>Last, First</Select>
                </SelectLabel>
              </RecordBar>
              <ButtonRow>
                <Select w={172} aria-label="Staff member" />
                {buttons.map(([icon, t, w]) => (
                  <PushButton key={t} type="button" $w={w}><Icon name={icon} />{t}</PushButton>
                ))}
              </ButtonRow>
              <Tabs>
                <Tab type="button" $w={154} $end>Details</Tab>
                {tabs.map(([t, w]) => <Tab key={t} type="button" $w={w}>{t}</Tab>)}
              </Tabs>
              <StaffForm />
            </Editor>
            <Aside>
              <AlertTab type="button" aria-label="Alerts"><Icon name="warning" /></AlertTab>
              <Card>
                <CardName><EmptyBox />Jeremy</CardName>
                <Photo>
                  <Svg width="62" height="81" viewBox="0 0 62 81" role="img" aria-label="Picture">
                    <path d="M28 13c8 0 12 5 11 13 2 0 1 7-1 8-1 4-2 5-2 8 3 5 21 5 23 12 2 8 3 18 3 27H1c0-9 0-19 3-26 3-7 17-8 18-13 0-3-1-4-2-8-2-1-4-7-2-8-1-8 2-13 10-13z" fill="#000" />
                    <text x="31" y="74" textAnchor="middle" fontFamily="DejaVu Serif, serif" fontStyle="italic" fontWeight="400" fontSize="11" fill="#3191c6">Picture</text>
                  </Svg>
                </Photo>
                Active
              </Card>
            </Aside>
          </Upper>

          <GridTools>
            <SelectSlot><Select w={118} aria-label="Columns">Default Columns</Select></SelectSlot>
            <GridButtons>
              <PushButton type="button" $w={65}><Icon name="gridAdd" />Basic Grid</PushButton>
              <PushButton type="button" $w={82}><Icon name="gridEdit" />Advanced Grid</PushButton>
            </GridButtons>
            <FindLabel htmlFor="find"><Icon name="binoculars" size={12} />Last, First</FindLabel>
            <div>
              <Hint>After Searching Press Enter, Tab or Click Out of Box</Hint>
              <SearchBox id="find" placeholder="Enter: Last, First" />
            </div>
          </GridTools>
          <StaffGrid />
        </Page>
        <Margin />
      </Backdrop>
    </>
  );
}
